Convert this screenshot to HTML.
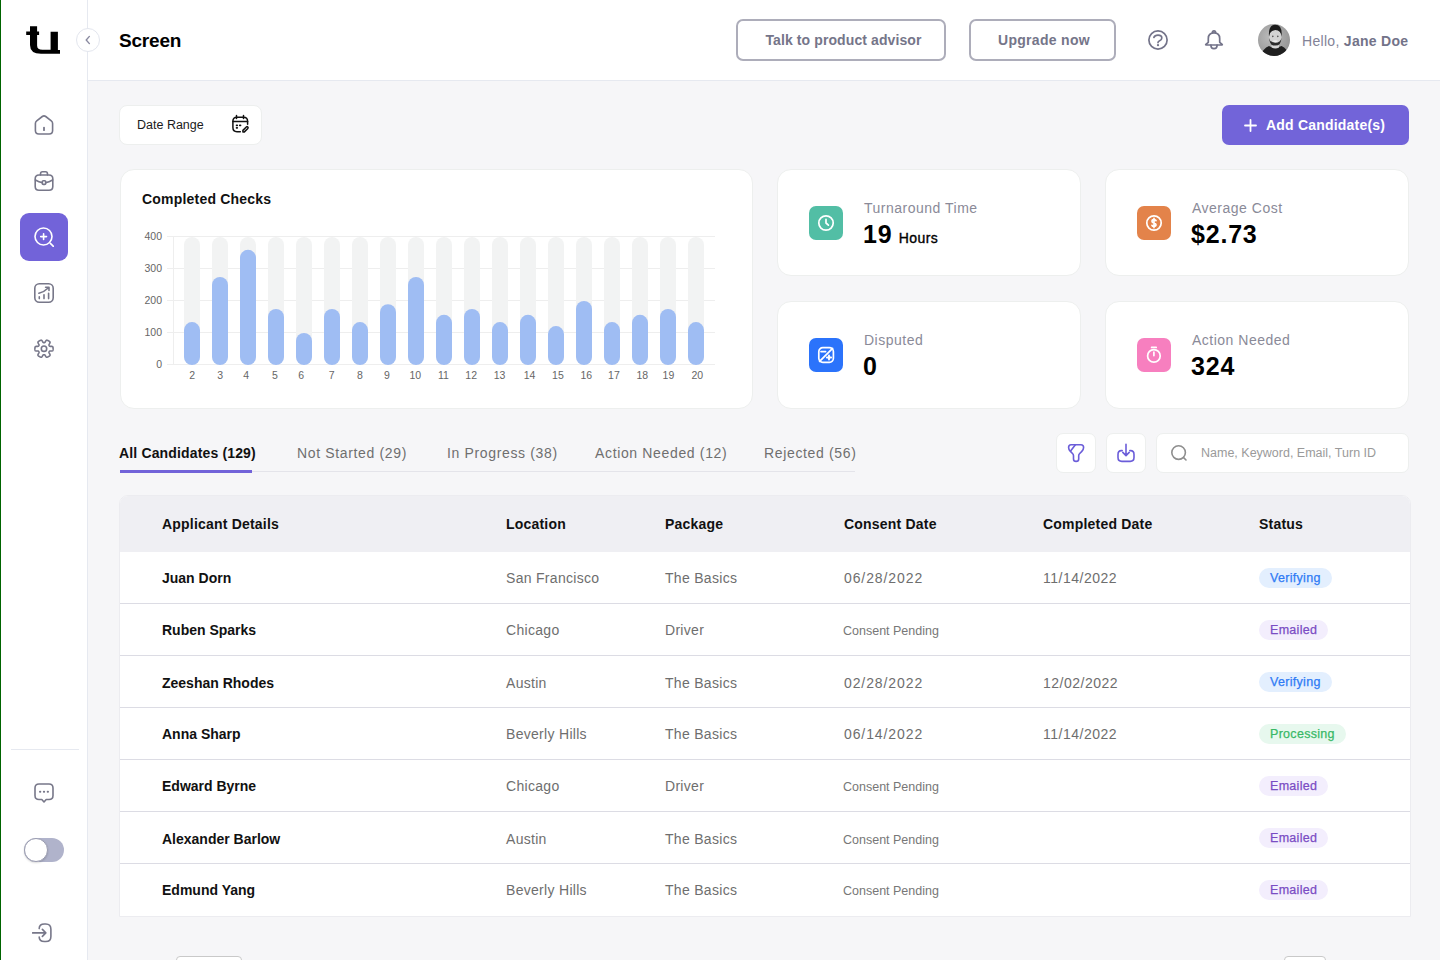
<!DOCTYPE html>
<html><head><meta charset="utf-8">
<style>
*{box-sizing:border-box;margin:0;padding:0}
html,body{width:1440px;height:960px;overflow:hidden;background:#f6f6f8;font-family:"Liberation Sans",sans-serif;color:#111}
.abs{position:absolute}
#green{position:absolute;left:0;top:0;width:1px;height:960px;background:#006400;z-index:10}
#sidebar{position:absolute;left:0;top:0;width:88px;height:960px;background:#fff;border-right:1px solid #e6e9f0}
#header{position:absolute;left:88px;top:0;width:1352px;height:81px;background:#fff;border-bottom:1px solid #e6e9f0}
.ico{position:absolute;width:20px;height:20px}
.btn-o{position:absolute;top:19px;height:42px;border:2px solid #adadba;border-radius:7px;background:#fff;color:#757589;font-weight:bold;font-size:14px;line-height:39px;text-align:center}
.card{position:absolute;background:#fff;border:1px solid #edefee;border-radius:14px}
.stat .ib{position:absolute;left:31px;width:34px;height:34px;border-radius:7px}
.stat .lbl{position:absolute;left:86px;font-size:14px;color:#8a8a98;white-space:nowrap;letter-spacing:0.5px}
.stat .val{position:absolute;left:85px;font-size:25px;font-weight:bold;color:#000;white-space:nowrap;letter-spacing:0.8px}
.tab{position:absolute;top:445px;font-size:14px;color:#6f6f6f;white-space:nowrap;letter-spacing:0.65px}
.sq{position:absolute;top:433px;width:40px;height:40px;background:#fff;border:1px solid #edefee;border-radius:7px}
#table{position:absolute;left:119px;top:495px;width:1292px;height:422px;background:#fff;border:1px solid #ececf0;border-radius:9px 9px 0 0;overflow:hidden}
.th{position:absolute;top:0;height:56px;line-height:56px;font-size:14px;font-weight:bold;color:#111;white-space:nowrap;letter-spacing:0.2px}
.row{position:absolute;left:0;width:1290px;height:52px;border-bottom:1px solid #dcdce4}
.row div{position:absolute;top:1px;height:51px;line-height:51px;white-space:nowrap}
.nm{left:42px;font-size:14px;font-weight:bold;color:#111}
.c1{left:386px;font-size:14px;color:#6e6e6e;letter-spacing:0.3px}
.c2{left:545px;font-size:14px;color:#6e6e6e;letter-spacing:0.3px}
.c3{left:724px;font-size:14px;color:#6e6e6e;letter-spacing:0.9px}
.cp{left:723px;font-size:12.5px;color:#777;margin-top:1px}
.c4{left:923px;font-size:14px;color:#6e6e6e;letter-spacing:0.5px}
.badge{left:1139px;top:16px!important;height:20px!important;line-height:20px!important;border-radius:10px;padding:0 11px 0 11px;font-size:12.5px;letter-spacing:0.3px;-webkit-text-stroke:0.25px currentColor}
.ver{background:#e3effe;color:#2f7bf5}
.em{background:#f3eefd;color:#7a4cc4}
.pr{background:#e7f8ee;color:#39b866}
</style></head><body>
<div id="green"></div>
<div id="sidebar">
  <!-- logo -->
  <svg class="abs" style="left:0;top:0" width="88" height="80" viewBox="0 0 88 80">
    <path d="M30,26.2 H37.1 V31.5 H39.1 V35 H37.1 V45.5 Q37.1,49.8 42.5,49.8 H50.6 V31.7 H57.9 V49.9 H60 V53.75 H41 Q30,53.75 30,45 V35 H26.2 V31.5 H30 Z" fill="#000"/>
  </svg>

  <!-- nav icons -->
  <svg class="abs" style="left:34px;top:115px" width="20" height="20" viewBox="0 0 20 20" fill="none" stroke="#777789" stroke-width="1.6" stroke-linecap="round" stroke-linejoin="round">
    <path d="M1.4,8.4 Q1.4,6.9 2.7,5.9 L8.3,1.5 Q10,0.3 11.7,1.5 L17.3,5.9 Q18.6,6.9 18.6,8.4 V15.6 Q18.6,19 15.2,19 H4.8 Q1.4,19 1.4,15.6 Z"/>
    <path d="M10,12.6 V15.2" stroke-width="1.8"/>
  </svg>
  <svg class="abs" style="left:34px;top:171px" width="20" height="20" viewBox="0 0 20 20" fill="none" stroke="#777789" stroke-width="1.6" stroke-linecap="round" stroke-linejoin="round">
    <path d="M6.5,4 V3 Q6.5,0.8 8.5,0.8 H11.5 Q13.5,0.8 13.5,3 V4"/>
    <path d="M5,4 H15 Q18.8,4 18.8,7.8 V15.5 Q18.8,19.2 15,19.2 H5 Q1.2,19.2 1.2,15.5 V7.8 Q1.2,4 5,4 Z"/>
    <path d="M1.4,9 Q5,11.2 8.3,11.6 M11.7,11.6 Q15,11.2 18.6,9"/>
    <rect x="8.3" y="9.8" width="3.4" height="3.6" rx="1"/>
  </svg>
  <div class="abs" style="left:20px;top:213px;width:48px;height:48px;background:#7263d9;border-radius:9px"></div>
  <svg class="abs" style="left:34px;top:227px" width="20" height="20" viewBox="0 0 20 20" fill="none" stroke="#fff" stroke-width="1.6" stroke-linecap="round" stroke-linejoin="round">
    <circle cx="9.5" cy="9.5" r="8.5"/>
    <path d="M16.4,16.4 L19.4,19.4"/>
    <path d="M9.6,6.7 V12.5 M6.7,9.6 H12.5"/>
  </svg>
  <svg class="abs" style="left:34px;top:283px" width="20" height="20" viewBox="0 0 20 20" fill="none" stroke="#777789" stroke-width="1.6" stroke-linecap="round" stroke-linejoin="round">
    <rect x="0.8" y="0.8" width="18.4" height="18.4" rx="4.5"/>
    <path d="M5.3,15.6 V13.9 M10,15.6 V11.8 M14.6,15.6 V10.2"/>
    <path d="M4.9,10.3 Q10.2,9 14.8,4.5 M11.6,4.2 H15 V7.4"/>
  </svg>
  <svg class="abs" style="left:34px;top:339px" width="20" height="20" viewBox="0 0 20 20" fill="none" stroke="#777789" stroke-width="1.6" stroke-linecap="round" stroke-linejoin="round">
    <circle cx="10" cy="9.7" r="2.7"/>
    <path d="M19.10,9.70 L19.09,10.02 L19.08,10.33 L19.04,10.65 L18.99,10.96 L18.92,11.27 L18.78,11.57 L18.50,11.82 L17.94,11.98 L17.11,12.01 L16.34,12.01 L15.87,12.07 L15.60,12.19 L15.43,12.35 L15.31,12.52 L15.20,12.70 L15.10,12.88 L15.01,13.08 L14.96,13.30 L14.98,13.59 L15.17,14.04 L15.55,14.70 L15.94,15.44 L16.08,16.00 L16.01,16.37 L15.82,16.64 L15.59,16.86 L15.35,17.06 L15.09,17.24 L14.82,17.42 L14.55,17.58 L14.27,17.73 L13.99,17.88 L13.70,18.01 L13.40,18.12 L13.10,18.21 L12.77,18.24 L12.41,18.12 L12.00,17.71 L11.55,17.01 L11.17,16.35 L10.88,15.96 L10.64,15.80 L10.42,15.73 L10.21,15.71 L10.00,15.70 L9.79,15.71 L9.58,15.73 L9.36,15.80 L9.12,15.96 L8.83,16.35 L8.45,17.01 L8.00,17.71 L7.59,18.12 L7.23,18.24 L6.90,18.21 L6.60,18.12 L6.30,18.01 L6.01,17.88 L5.73,17.73 L5.45,17.58 L5.18,17.42 L4.91,17.24 L4.65,17.06 L4.41,16.86 L4.18,16.64 L3.99,16.37 L3.92,16.00 L4.06,15.44 L4.45,14.70 L4.83,14.04 L5.02,13.59 L5.04,13.30 L4.99,13.08 L4.90,12.88 L4.80,12.70 L4.69,12.52 L4.57,12.35 L4.40,12.19 L4.13,12.07 L3.66,12.01 L2.89,12.01 L2.06,11.98 L1.50,11.82 L1.22,11.57 L1.08,11.27 L1.01,10.96 L0.96,10.65 L0.92,10.33 L0.91,10.02 L0.90,9.70 L0.91,9.38 L0.92,9.07 L0.96,8.75 L1.01,8.44 L1.08,8.13 L1.22,7.83 L1.50,7.58 L2.06,7.42 L2.89,7.39 L3.66,7.39 L4.13,7.33 L4.40,7.21 L4.57,7.05 L4.69,6.88 L4.80,6.70 L4.90,6.52 L4.99,6.32 L5.04,6.10 L5.02,5.81 L4.83,5.36 L4.45,4.70 L4.06,3.96 L3.92,3.40 L3.99,3.03 L4.18,2.76 L4.41,2.54 L4.65,2.34 L4.91,2.16 L5.18,1.98 L5.45,1.82 L5.73,1.67 L6.01,1.52 L6.30,1.39 L6.60,1.28 L6.90,1.19 L7.23,1.16 L7.59,1.28 L8.00,1.69 L8.45,2.39 L8.83,3.05 L9.12,3.44 L9.36,3.60 L9.58,3.67 L9.79,3.69 L10.00,3.70 L10.21,3.69 L10.42,3.67 L10.64,3.60 L10.88,3.44 L11.17,3.05 L11.55,2.39 L12.00,1.69 L12.41,1.28 L12.77,1.16 L13.10,1.19 L13.40,1.28 L13.70,1.39 L13.99,1.52 L14.27,1.67 L14.55,1.82 L14.82,1.98 L15.09,2.16 L15.35,2.34 L15.59,2.54 L15.82,2.76 L16.01,3.03 L16.08,3.40 L15.94,3.96 L15.55,4.70 L15.17,5.36 L14.98,5.81 L14.96,6.10 L15.01,6.32 L15.10,6.52 L15.20,6.70 L15.31,6.88 L15.43,7.05 L15.60,7.21 L15.87,7.33 L16.34,7.39 L17.11,7.39 L17.94,7.42 L18.50,7.58 L18.78,7.83 L18.92,8.13 L18.99,8.44 L19.04,8.75 L19.08,9.07 L19.09,9.38Z"/>
  </svg>
  <div class="abs" style="left:11px;top:749px;width:68px;height:1px;background:#e6e9f0"></div>
  <svg class="abs" style="left:34px;top:783px" width="20" height="20" viewBox="0 0 20 20" fill="none" stroke="#777789" stroke-width="1.6" stroke-linecap="round" stroke-linejoin="round">
    <path d="M5,1 H15 Q19,1 19,5 V12.5 Q19,16.5 15,16.5 H12.2 L10,19 L7.8,16.5 H5 Q1,16.5 1,12.5 V5 Q1,1 5,1 Z"/>
    <path d="M6,8.8 H6.3 M9.85,8.8 H10.15 M13.7,8.8 H14" stroke-width="2"/>
  </svg>
  <div class="abs" style="left:24px;top:838px;width:40px;height:24px;border-radius:12px;background:#b0b3cb"></div>
  <div class="abs" style="left:24px;top:838px;width:24px;height:24px;border-radius:12px;background:#fff;border:1px solid #9a9cb0;box-shadow:0 1px 2px rgba(0,0,0,.15)"></div>
  <svg class="abs" style="left:32px;top:923px" width="22" height="20" viewBox="0 0 22 20" fill="none" stroke="#777789" stroke-width="1.6" stroke-linecap="round" stroke-linejoin="round">
    <path d="M7.2,5.6 Q7.2,1 12.4,1 H13.8 Q18.9,1 18.9,6.2 V13.4 Q18.9,18.5 13.8,18.5 H12.4 Q7.2,18.5 7.2,14"/>
    <path d="M0.6,9.9 H13.6 M10.4,6.4 L13.8,9.9 L10.4,13.4"/>
  </svg>
</div>
<div id="header"></div>
<div class="abs" style="left:76px;top:28px;width:24px;height:24px;border-radius:12px;background:#fff;border:1px solid #e3e6ee;z-index:5"></div>
<svg class="abs" style="left:82px;top:34px;z-index:6" width="12" height="12" viewBox="0 0 12 12" fill="none" stroke="#8a8aa0" stroke-width="1.4" stroke-linecap="round" stroke-linejoin="round"><path d="M7.4,2.4 L4.2,6 L7.4,9.6"/></svg>
<div class="abs" style="left:119px;top:28.6px;font-size:19px;font-weight:bold;color:#000;line-height:24px;letter-spacing:-0.2px">Screen</div>
<div class="btn-o" style="left:736px;width:210px;padding-left:5px;letter-spacing:0.1px">Talk to product advisor</div>
<div class="btn-o" style="left:969px;width:147px;padding-left:3px;letter-spacing:0.3px">Upgrade now</div>
<svg class="abs" style="left:1146px;top:28px" width="24" height="24" viewBox="0 0 24 24" fill="none" stroke="#737389" stroke-width="1.7" stroke-linecap="round" stroke-linejoin="round">
  <circle cx="12" cy="12" r="9.1"/>
  <path d="M7.9,9.4 Q8.8,7.1 12,7.1 Q15.8,7.1 15.8,9.9 Q15.8,11.7 13.6,12.7 Q12,13.4 12,14.6"/>
  <path d="M12,17.1 V17.2" stroke-width="2.2"/>
</svg>
<svg class="abs" style="left:1202px;top:28px" width="24" height="24" viewBox="0 0 24 24" fill="none" stroke="#737389" stroke-width="1.7" stroke-linecap="round" stroke-linejoin="round">
  <path d="M6.3,14.3 V10.6 Q6.3,4.9 12,4.9 Q17.7,4.9 17.7,10.6 V14.3 L20.1,16.4 Q20.6,17 19.9,17 H4.1 Q3.4,17 3.9,16.4 Z"/>
  <path d="M10.4,4.9 Q10.4,2.9 12,2.9 Q13.6,2.9 13.6,4.9"/>
  <path d="M8.9,17.2 Q8.9,20.6 12,20.6 Q15.1,20.6 15.1,17.2"/>
</svg>
<svg class="abs" style="left:1258px;top:24px" width="32" height="32" viewBox="0 0 32 32">
  <defs><clipPath id="av"><circle cx="16" cy="16" r="16"/></clipPath>
  <radialGradient id="avbg" cx="0.4" cy="0.4" r="0.8"><stop offset="0" stop-color="#bcbcbc"/><stop offset="1" stop-color="#8c8c8c"/></radialGradient></defs>
  <g clip-path="url(#av)">
    <rect width="32" height="32" fill="url(#avbg)"/>
    <path d="M2,34 Q4,25 11,22 Q17,25.5 23.5,22 Q30,25 32,34 Z" fill="#1f1f1f"/>
    <path d="M13.6,18 V23.6 Q17.3,25.4 21,23.6 V18 Z" fill="#d6d6d6"/>
    <ellipse cx="17.3" cy="13.2" rx="6.1" ry="8" fill="#d2d2d2"/>
    <path d="M11,12.5 Q10,0.8 17.3,0.8 Q24.6,0.8 23.6,12.5 Q23,6.4 17.3,6 Q11.6,6.4 11,12.5 Z" fill="#1c1c1c"/>
    <path d="M11.2,14 Q11.4,21.8 17.3,21.6 Q23.2,21.8 23.4,14 Q22.6,18.8 17.3,18.8 Q12,18.8 11.2,14 Z" fill="#2c2c2c"/>
    <ellipse cx="17.3" cy="17.3" rx="2.4" ry="1" fill="#ececec"/>
    <circle cx="14.8" cy="12.4" r="0.8" fill="#555"/><circle cx="19.8" cy="12.4" r="0.8" fill="#555"/>
  </g>
</svg>
<div class="abs" style="left:1302px;top:32px;font-size:14px;line-height:18px;color:#838397;white-space:nowrap;letter-spacing:0.3px">Hello, <b style="color:#737389">Jane Doe</b></div>

<!-- date range -->
<div class="abs" style="left:119px;top:105px;width:143px;height:40px;background:#fff;border:1px solid #edefee;border-radius:8px"></div>
<div class="abs" style="left:137px;top:118px;font-size:12.5px;line-height:14px;color:#1b1b1b">Date Range</div>
<svg class="abs" style="left:230px;top:114px" width="20" height="20" viewBox="0 0 20 20" fill="none" stroke="#111" stroke-width="1.5" stroke-linecap="round" stroke-linejoin="round">
  <path d="M10.3,17.7 H7 Q2.9,17.7 2.9,13.6 V7.3 Q2.9,3.3 7,3.3 H13.5 Q17.6,3.3 17.6,7.3 V10.3"/>
  <path d="M6.5,1.4 V4.6 M13.5,1.4 V4.6 M2.9,7.5 H17.6"/>
  <path d="M6.6,11.3 H7.2 M9.8,11.3 H10.5 M6.6,13.8 H7.2" stroke-width="1.8"/>
  <path d="M12.9,17.9 L12.9,16.4 L16.3,13 Q17.1,12.3 17.8,13 Q18.5,13.8 17.8,14.5 L14.4,17.9 Z"/>
</svg>
<!-- add button -->
<div class="abs" style="left:1222px;top:105px;width:187px;height:40px;background:#7264d9;border-radius:7px"></div>
<svg class="abs" style="left:1244px;top:119px" width="13" height="13" viewBox="0 0 13 13" stroke="#fff" stroke-width="1.8" stroke-linecap="round"><path d="M6.5,1 V12 M1,6.5 H12"/></svg>
<div class="abs" style="left:1266px;top:117px;font-size:14px;line-height:16px;font-weight:bold;color:#fff;white-space:nowrap;letter-spacing:0.2px">Add Candidate(s)</div>
<!-- chart card -->
<div class="card" style="left:120px;top:169px;width:633px;height:240px"></div>
<div class="abs" style="left:142px;top:191px;font-size:14px;line-height:16px;font-weight:bold;color:#111;white-space:nowrap;letter-spacing:0.2px">Completed Checks</div>
<svg class="abs" style="left:0;top:0" width="760" height="420" font-family="Liberation Sans" font-size="10.5" fill="#666">
  <rect x="167" y="236" width="548" height="1" fill="#eeeeee"/><rect x="167" y="268" width="548" height="1" fill="#eeeeee"/><rect x="167" y="300" width="548" height="1" fill="#eeeeee"/><rect x="167" y="332" width="548" height="1" fill="#eeeeee"/><rect x="167" y="364" width="548" height="1" fill="#eeeeee"/>
  <rect x="173" y="236" width="1" height="129" fill="#eeeeee"/>
  <text x="162" y="240" text-anchor="end">400</text><text x="162" y="272" text-anchor="end">300</text><text x="162" y="304" text-anchor="end">200</text><text x="162" y="336" text-anchor="end">100</text><text x="162" y="368" text-anchor="end">0</text>
  <rect x="184" y="237" width="16" height="128" rx="8" fill="#f2f3f3"/>
  <rect x="184" y="322.1" width="16" height="42.9" rx="8" fill="#9fbdf3"/>
  <text x="192.2" y="379" text-anchor="middle">2</text>
  <rect x="212" y="237" width="16" height="128" rx="8" fill="#f2f3f3"/>
  <rect x="212" y="277.0" width="16" height="88.0" rx="8" fill="#9fbdf3"/>
  <text x="220.2" y="379" text-anchor="middle">3</text>
  <rect x="240" y="237" width="16" height="128" rx="8" fill="#f2f3f3"/>
  <rect x="240" y="249.8" width="16" height="115.2" rx="8" fill="#9fbdf3"/>
  <text x="246.1" y="379" text-anchor="middle">4</text>
  <rect x="268" y="237" width="16" height="128" rx="8" fill="#f2f3f3"/>
  <rect x="268" y="309.0" width="16" height="56.0" rx="8" fill="#9fbdf3"/>
  <text x="274.9" y="379" text-anchor="middle">5</text>
  <rect x="296" y="237" width="16" height="128" rx="8" fill="#f2f3f3"/>
  <rect x="296" y="333.0" width="16" height="32.0" rx="8" fill="#9fbdf3"/>
  <text x="301.1" y="379" text-anchor="middle">6</text>
  <rect x="324" y="237" width="16" height="128" rx="8" fill="#f2f3f3"/>
  <rect x="324" y="309.0" width="16" height="56.0" rx="8" fill="#9fbdf3"/>
  <text x="331.7" y="379" text-anchor="middle">7</text>
  <rect x="352" y="237" width="16" height="128" rx="8" fill="#f2f3f3"/>
  <rect x="352" y="322.1" width="16" height="42.9" rx="8" fill="#9fbdf3"/>
  <text x="359.9" y="379" text-anchor="middle">8</text>
  <rect x="380" y="237" width="16" height="128" rx="8" fill="#f2f3f3"/>
  <rect x="380" y="304.2" width="16" height="60.8" rx="8" fill="#9fbdf3"/>
  <text x="386.9" y="379" text-anchor="middle">9</text>
  <rect x="408" y="237" width="16" height="128" rx="8" fill="#f2f3f3"/>
  <rect x="408" y="277.0" width="16" height="88.0" rx="8" fill="#9fbdf3"/>
  <text x="415.3" y="379" text-anchor="middle">10</text>
  <rect x="436" y="237" width="16" height="128" rx="8" fill="#f2f3f3"/>
  <rect x="436" y="314.8" width="16" height="50.2" rx="8" fill="#9fbdf3"/>
  <text x="443.5" y="379" text-anchor="middle">11</text>
  <rect x="464" y="237" width="16" height="128" rx="8" fill="#f2f3f3"/>
  <rect x="464" y="309.0" width="16" height="56.0" rx="8" fill="#9fbdf3"/>
  <text x="471.2" y="379" text-anchor="middle">12</text>
  <rect x="492" y="237" width="16" height="128" rx="8" fill="#f2f3f3"/>
  <rect x="492" y="322.1" width="16" height="42.9" rx="8" fill="#9fbdf3"/>
  <text x="499.6" y="379" text-anchor="middle">13</text>
  <rect x="520" y="237" width="16" height="128" rx="8" fill="#f2f3f3"/>
  <rect x="520" y="314.8" width="16" height="50.2" rx="8" fill="#9fbdf3"/>
  <text x="529.5" y="379" text-anchor="middle">14</text>
  <rect x="548" y="237" width="16" height="128" rx="8" fill="#f2f3f3"/>
  <rect x="548" y="326.1" width="16" height="38.9" rx="8" fill="#9fbdf3"/>
  <text x="557.9" y="379" text-anchor="middle">15</text>
  <rect x="576" y="237" width="16" height="128" rx="8" fill="#f2f3f3"/>
  <rect x="576" y="301.0" width="16" height="64.0" rx="8" fill="#9fbdf3"/>
  <text x="586.3" y="379" text-anchor="middle">16</text>
  <rect x="604" y="237" width="16" height="128" rx="8" fill="#f2f3f3"/>
  <rect x="604" y="322.1" width="16" height="42.9" rx="8" fill="#9fbdf3"/>
  <text x="613.9" y="379" text-anchor="middle">17</text>
  <rect x="632" y="237" width="16" height="128" rx="8" fill="#f2f3f3"/>
  <rect x="632" y="314.8" width="16" height="50.2" rx="8" fill="#9fbdf3"/>
  <text x="642.3" y="379" text-anchor="middle">18</text>
  <rect x="660" y="237" width="16" height="128" rx="8" fill="#f2f3f3"/>
  <rect x="660" y="309.0" width="16" height="56.0" rx="8" fill="#9fbdf3"/>
  <text x="668.4" y="379" text-anchor="middle">19</text>
  <rect x="688" y="237" width="16" height="128" rx="8" fill="#f2f3f3"/>
  <rect x="688" y="322.1" width="16" height="42.9" rx="8" fill="#9fbdf3"/>
  <text x="697.3" y="379" text-anchor="middle">20</text>
</svg>
<div class="card stat" style="left:777px;top:169px;width:304px;height:107px;--dy:1px">
  <div class="ib" style="top:calc(35px + var(--dy,0px));background:#52bea5"></div>
  <svg class="abs" style="left:38px;top:calc(42px + var(--dy,0px))" width="20" height="20" viewBox="0 0 20 20" fill="none" stroke="#fff" stroke-width="1.7" stroke-linecap="round" stroke-linejoin="round"><circle cx="10" cy="10" r="7.2"/><path d="M10,6.4 V10 L12.4,12.2"/></svg>
  <div class="lbl" style="top:calc(29px + var(--dy,0px));line-height:16px">Turnaround Time</div>
  <div class="val" style="top:calc(49px + var(--dy,0px));line-height:28px">19 <span style="font-size:14px;font-weight:normal;margin-left:-1.5px;letter-spacing:0.45px;-webkit-text-stroke:0.35px #000">Hours</span></div>
</div>
<div class="card stat" style="left:1105px;top:169px;width:304px;height:107px;--dy:1px">
  <div class="ib" style="top:calc(35px + var(--dy,0px));background:#e3834a"></div>
  <svg class="abs" style="left:38px;top:calc(42px + var(--dy,0px))" width="20" height="20" viewBox="0 0 20 20" fill="none" stroke="#fff" stroke-width="1.7" stroke-linecap="round" stroke-linejoin="round"><circle cx="10" cy="10" r="7.2"/><path d="M12,7.6 Q11.6,6.6 10,6.6 Q8,6.6 8,8.2 Q8,9.6 10,10 Q12,10.4 12,11.8 Q12,13.4 10,13.4 Q8.4,13.4 8,12.4 M10,5.4 V14.6"/></svg>
  <div class="lbl" style="top:calc(29px + var(--dy,0px));line-height:16px">Average Cost</div>
  <div class="val" style="top:calc(49px + var(--dy,0px));line-height:28px">$2.73</div>
</div>
<div class="card stat" style="left:777px;top:301px;width:304px;height:108px;--dy:1px">
  <div class="ib" style="top:calc(35px + var(--dy,0px));background:#2b73fb"></div>
  <svg class="abs" style="left:38px;top:calc(42px + var(--dy,0px))" width="20" height="20" viewBox="0 0 20 20" fill="none" stroke="#fff" stroke-width="1.7" stroke-linecap="round" stroke-linejoin="round"><rect x="2.8" y="2.7" width="14.6" height="14.6" rx="4"/><path d="M3.6,16.4 L16.6,3.4 M5,6.6 H9.6" /><path d="M13,10.4 V14.6 M10.9,12.5 H15.1" stroke-width="1.9"/></svg>
  <div class="lbl" style="top:calc(29px + var(--dy,0px));line-height:16px">Disputed</div>
  <div class="val" style="top:calc(49px + var(--dy,0px));line-height:28px">0</div>
</div>
<div class="card stat" style="left:1105px;top:301px;width:304px;height:108px;--dy:1px">
  <div class="ib" style="top:calc(35px + var(--dy,0px));background:#f77fbf"></div>
  <svg class="abs" style="left:38px;top:calc(42px + var(--dy,0px))" width="20" height="20" viewBox="0 0 20 20" fill="none" stroke="#fff" stroke-width="1.7" stroke-linecap="round" stroke-linejoin="round"><circle cx="9.9" cy="10.9" r="6.3"/><path d="M9.9,7.2 V10.6 M7.6,2.4 H12.2"/></svg>
  <div class="lbl" style="top:calc(29px + var(--dy,0px));line-height:16px">Action Needed</div>
  <div class="val" style="top:calc(49px + var(--dy,0px));line-height:28px">324</div>
</div>

<!-- tabs -->
<div class="abs" style="left:120px;top:471px;width:735px;height:1px;background:#e4e4ea"></div>
<div class="abs" style="left:120px;top:470px;width:132px;height:3px;background:#7263d9"></div>
<div class="tab" style="left:119px;color:#111;font-weight:bold;line-height:16px;letter-spacing:0.15px">All Candidates (129)</div>
<div class="tab" style="left:297px;line-height:16px">Not Started (29)</div>
<div class="tab" style="left:447px;line-height:16px">In Progress (38)</div>
<div class="tab" style="left:595px;line-height:16px">Action Needed (12)</div>
<div class="tab" style="left:764px;line-height:16px">Rejected (56)</div>
<div class="sq" style="left:1056px"></div>
<svg class="abs" style="left:1066px;top:443px" width="20" height="20" viewBox="0 0 20 20" fill="none" stroke="#6b5dd9" stroke-width="1.6" stroke-linecap="round" stroke-linejoin="round">
  <path d="M5,1.7 H15 Q17.6,1.7 17.6,4.4 Q17.6,6.6 15.6,8.6 L13.7,10.5 Q12.7,11.5 12.7,12.8 V15.9 Q12.7,18.4 10.1,18.4 Q7.5,18.4 7.5,15.9 V12.8 Q7.5,11.5 6.5,10.5 L4.4,8.4 Q2.6,6.6 2.6,4.4 Q2.6,1.7 5,1.7 Z"/>
  <path d="M9.4,1.8 L4.6,7.9"/>
</svg>
<div class="sq" style="left:1106px"></div>
<svg class="abs" style="left:1116px;top:443px" width="20" height="20" viewBox="0 0 20 20" fill="none" stroke="#6b5dd9" stroke-width="1.6" stroke-linecap="round" stroke-linejoin="round">
  <path d="M6.2,7.6 H5.4 Q2,7.6 2,11.4 V14.6 Q2,18.4 5.8,18.4 H14.2 Q18,18.4 18,14.6 V11.4 Q18,7.6 14.6,7.6 H13.8"/>
  <path d="M10,1.2 V12.4 M6.8,9.4 L10,12.6 L13.2,9.4"/>
</svg>
<div class="sq" style="left:1156px;width:253px"></div>
<svg class="abs" style="left:1170px;top:444px" width="18" height="18" viewBox="0 0 18 18" fill="none" stroke="#8e8e8e" stroke-width="1.6" stroke-linecap="round"><circle cx="8.6" cy="8.6" r="6.8"/><path d="M13.6,13.6 L16,16"/></svg>
<div class="abs" style="left:1201px;top:446px;font-size:12.5px;line-height:14px;color:#9a9a9a;white-space:nowrap">Name, Keyword, Email, Turn ID</div>
<div id="table">
<div class="abs" style="left:0;top:0;width:1290px;height:56px;background:#efeff3"></div>
<div class="th" style="left:42px">Applicant Details</div>
<div class="th" style="left:386px">Location</div>
<div class="th" style="left:545px">Package</div>
<div class="th" style="left:724px">Consent Date</div>
<div class="th" style="left:923px">Completed Date</div>
<div class="th" style="left:1139px">Status</div>
<div class="row" style="top:56px"><div class="nm">Juan Dorn</div><div class="c1">San Francisco</div><div class="c2">The Basics</div><div class="c3">06/28/2022</div><div class="c4">11/14/2022</div><div class="badge ver">Verifying</div></div>
<div class="row" style="top:108px"><div class="nm">Ruben Sparks</div><div class="c1">Chicago</div><div class="c2">Driver</div><div class="cp">Consent Pending</div><div class="badge em">Emailed</div></div>
<div class="row" style="top:160px;padding-top:0"><div class="nm" style="top:2px">Zeeshan Rhodes</div><div class="c1" style="top:2px">Austin</div><div class="c2" style="top:2px">The Basics</div><div class="c3" style="top:2px">02/28/2022</div><div class="c4" style="top:2px">12/02/2022</div><div class="badge ver">Verifying</div></div>
<div class="row" style="top:212px"><div class="nm">Anna Sharp</div><div class="c1">Beverly Hills</div><div class="c2">The Basics</div><div class="c3">06/14/2022</div><div class="c4">11/14/2022</div><div class="badge pr">Processing</div></div>
<div class="row" style="top:264px"><div class="nm">Edward Byrne</div><div class="c1">Chicago</div><div class="c2">Driver</div><div class="cp">Consent Pending</div><div class="badge em">Emailed</div></div>
<div class="row" style="top:316px;padding-top:0"><div class="nm" style="top:2px">Alexander Barlow</div><div class="c1" style="top:2px">Austin</div><div class="c2" style="top:2px">The Basics</div><div class="cp" style="top:2px">Consent Pending</div><div class="badge em">Emailed</div></div>
<div class="row" style="top:368px;border-bottom:none"><div class="nm">Edmund Yang</div><div class="c1">Beverly Hills</div><div class="c2">The Basics</div><div class="cp">Consent Pending</div><div class="badge em">Emailed</div></div>
</div>
<div class="abs" style="left:176px;top:956px;width:66px;height:30px;background:#fff;border:1px solid #c9c9c9;border-radius:4px"></div>
<div class="abs" style="left:1284px;top:956px;width:42px;height:30px;background:#fff;border:1px solid #c9c9c9;border-radius:4px"></div>
</body></html>
